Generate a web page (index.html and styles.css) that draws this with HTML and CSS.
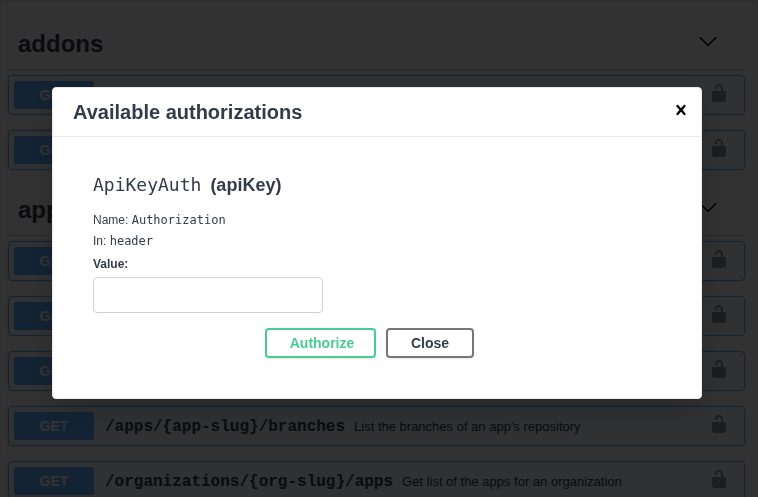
FILE: index.html
```html
<!DOCTYPE html>
<html lang="en">
<head>
<meta charset="utf-8">
<title>Available authorizations</title>
<link rel="stylesheet" href="styles.css">
</head>
<body>
<svg class="defs" width="0" height="0" aria-hidden="true">
  <symbol id="unlocked" viewBox="0 0 20 20"><path d="M15.8 8H14V5.6C14 2.703 12.665 1 10 1 7.334 1 6 2.703 6 5.6V6h2v-.801C8 3.754 8.797 3 10 3c1.203 0 2 .754 2 2.199V8H4c-.553 0-1 .646-1 1.199V17c0 .549.428 1.139.951 1.307l1.197.387C5.672 18.861 6.55 19 7.1 19h5.8c.549 0 1.428-.139 1.951-.307l1.196-.387c.524-.167.953-.757.953-1.306V9.199C17 8.646 16.352 8 15.8 8z"/></symbol>
  <symbol id="arrow" viewBox="0 0 20 20"><path d="M17.418 6.109c.272-.268.709-.268.979 0s.271.701 0 .969l-7.908 7.83c-.27.268-.707.268-.979 0l-7.908-7.83c-.27-.268-.27-.701 0-.969.271-.268.709-.268.979 0L10 13.25l7.418-7.141z"/></symbol>
  <symbol id="close" viewBox="0 0 20 20"><path d="M14.348 14.849c-.469.469-1.229.469-1.697 0L10 11.819l-2.651 3.029c-.469.469-1.229.469-1.697 0-.469-.469-.469-1.229 0-1.697l2.758-3.15-2.759-3.152c-.469-.469-.469-1.228 0-1.697.469-.469 1.228-.469 1.697 0L10 8.183l2.651-3.031c.469-.469 1.228-.469 1.697 0 .469.469.469 1.229 0 1.697l-2.758 3.152 2.758 3.15c.469.469.469 1.229 0 1.698z"/></symbol>
</svg>
<main class="page">
  <section class="tag">
    <header class="tag-header"><h3>addons</h3><svg class="icon"><use href="#arrow"/></svg></header>
    <div class="operations">
      <div class="op"><span class="method">GET</span><svg class="icon lock"><use href="#unlocked"/></svg></div>
      <div class="op"><span class="method">GET</span><svg class="icon lock"><use href="#unlocked"/></svg></div>
    </div>
  </section>
  <section class="tag">
    <header class="tag-header"><h3>apps</h3><svg class="icon"><use href="#arrow"/></svg></header>
    <div class="operations">
      <div class="op"><span class="method">GET</span><svg class="icon lock"><use href="#unlocked"/></svg></div>
      <div class="op"><span class="method">GET</span><svg class="icon lock"><use href="#unlocked"/></svg></div>
      <div class="op"><span class="method">GET</span><svg class="icon lock"><use href="#unlocked"/></svg></div>
      <div class="op"><span class="method">GET</span><span class="path">/apps/{app-slug}/branches</span><span class="summary">List the branches of an app's repository</span><svg class="icon lock"><use href="#unlocked"/></svg></div>
      <div class="op"><span class="method">GET</span><span class="path">/organizations/{org-slug}/apps</span><span class="summary">Get list of the apps for an organization</span><svg class="icon lock"><use href="#unlocked"/></svg></div>
    </div>
  </section>
</main>
<div class="backdrop">
  <div class="modal" role="dialog">
    <header class="modal-header"><h3>Available authorizations</h3><button class="close" type="button"><svg class="icon"><use href="#close"/></svg></button></header>
    <form class="modal-body">
      <h4><code>ApiKeyAuth</code> <span>(apiKey)</span></h4>
      <p>Name: <code>Authorization</code></p>
      <p>In: <code>header</code></p>
      <label for="value">Value:</label>
      <input id="value" type="text">
      <div class="actions">
        <button class="btn authorize" type="button">Authorize</button>
        <button class="btn" type="button">Close</button>
      </div>
    </form>
  </div>
</div>
</body>
</html>
```
FILE: styles.css
```css
* { box-sizing: border-box; }

html { overflow: hidden; }

body {
  margin: 0;
  height: 497px;
  overflow: hidden;
  background: #fafafa;
  color: #333b49;
  font-family: "Liberation Sans", Arial, sans-serif;
}

h3, h4, p { margin: 0; }

.defs { position: absolute; }

.icon { display: block; flex: none; width: 20px; height: 20px; }

.page {
  padding: 18px 13px 0 8px;
  box-shadow: inset 0 1px 2px rgba(0, 0, 0, .15);
}

.tag-header {
  display: flex;
  justify-content: space-between;
  height: 52px;
  padding: 12px 27px 0 10px;
  border-bottom: 1px solid rgba(59, 65, 81, .3);
}

.tag-header h3 { font-size: 24px; line-height: 27px; }

.tag-header .icon { margin-top: 1px; fill: #000; }

.operations { padding-top: 5px; }

.tag + .tag { margin-top: 14px; }

.op {
  display: flex;
  align-items: center;
  height: 40px;
  margin-bottom: 15px;
  padding: 5px 15px 5px 5px;
  border: 1px solid #61affe;
  border-radius: 4px;
  background: rgba(97, 175, 254, .1);
  box-shadow: 0 0 3px rgba(0, 0, 0, .19);
}

.op:last-child { margin-bottom: 0; }

.method {
  width: 80px;
  height: 28px;
  border-radius: 3px;
  background: #61affe;
  color: #fff;
  font-size: 14px;
  font-weight: 700;
  line-height: 28px;
  text-align: center;
}

.path {
  margin-left: 11px;
  padding-top: 2px;
  font: 700 16px/20px "Liberation Mono", "Courier New", monospace;
}

.summary { margin-left: 9px; font-size: 13px; }

.lock { margin: -4px 0 0 auto; opacity: .4; }

.backdrop {
  position: fixed;
  inset: 0;
  padding: 87px 56px 0 52px;
  background: rgba(0, 0, 0, .8);
}

.modal {
  height: 312px;
  border: 1px solid #ebebeb;
  border-radius: 4px;
  background: #fff;
  box-shadow: 0 10px 30px rgba(0, 0, 0, .2);
}

.modal-header {
  display: flex;
  align-items: center;
  justify-content: space-between;
  height: 49px;
  padding: 0 10px 0 20px;
  border-bottom: 1px solid #ebebeb;
}

.modal-header h3 { font-size: 20px; line-height: 24px; }

.close { padding: 0; border: 0; margin-top: -5px; background: none; }

.modal-body {
  display: flex;
  flex-direction: column;
  align-items: flex-start;
  padding: 36px 40px 0;
  font-size: 12px;
}

code { font-family: "DejaVu Sans Mono", monospace; }

h4 { display: flex; gap: 9px; font-size: 18px; line-height: 24px; }

h4 code { font-weight: 400; }

.modal-body p { line-height: 21px; }

h4 + p { margin-top: 13px; }

label { margin-top: 2px; font-weight: 700; line-height: 21px; }

input {
  width: 230px;
  height: 36px;
  margin-top: 2px;
  border: 1px solid #d0d0d0;
  border-radius: 4px;
  background: #fff;
}

.actions {
  display: flex;
  align-self: center;
  gap: 10px;
  margin: 15px 0 0 -15px;
}

.btn {
  width: 88px;
  height: 30px;
  padding: 0;
  border: 2px solid #777;
  border-radius: 4px;
  background: transparent;
  box-shadow: 0 1px 2px rgba(0, 0, 0, .1);
  color: #333b49;
  font: 700 14px/26px "Liberation Sans", Arial, sans-serif;
}

.authorize {
  width: 111px;
  padding-left: 3px;
  border-color: #49cc90;
  color: #49cc90;
}
```
